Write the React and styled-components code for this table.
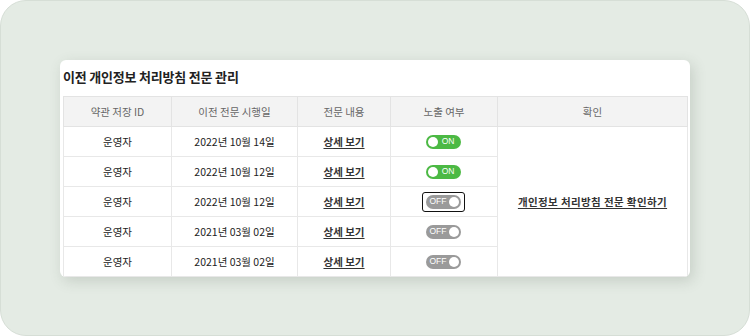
import React from "react";
import styled, { createGlobalStyle } from "styled-components";

const rows = [
  { id: "운영자", date: "2022년 10월 14일", on: true },
  { id: "운영자", date: "2022년 10월 12일", on: true },
  { id: "운영자", date: "2022년 10월 12일", on: false, focused: true },
  { id: "운영자", date: "2021년 03월 02일", on: false },
  { id: "운영자", date: "2021년 03월 02일", on: false },
];

const columns = [
  { label: "약관 저장 ID", width: 108 },
  { label: "이전 전문 시행일", width: 126 },
  { label: "전문 내용", width: 93 },
  { label: "노출 여부", width: 107 },
  { label: "확인", width: 190 },
];

const Toggle = ({ on, focused }) => (
  <ToggleRing focused={focused}>
    <ToggleBody on={on}>
      {on ? (
        <>
          <Knob />
          <ToggleText>ON</ToggleText>
        </>
      ) : (
        <>
          <ToggleText>OFF</ToggleText>
          <Knob />
        </>
      )}
    </ToggleBody>
  </ToggleRing>
);

const App = () => {
  return (
    <>
      <GlobalStyle />
      <Frame>
        <Card>
          <Title>이전 개인정보 처리방침 전문 관리</Title>
          <Table>
            <colgroup>
              {columns.map((c) => (
                <col key={c.label} style={{ width: c.width }} />
              ))}
            </colgroup>
            <thead>
              <tr>
                {columns.map((c) => (
                  <Th key={c.label}>{c.label}</Th>
                ))}
              </tr>
            </thead>
            <tbody>
              {rows.map((row, i) => (
                <tr key={i}>
                  <Td>{row.id}</Td>
                  <Td>{row.date}</Td>
                  <Td>
                    <TextLink>상세 보기</TextLink>
                  </Td>
                  <Td>
                    <Toggle on={row.on} focused={row.focused} />
                  </Td>
                  {i === 0 && (
                    <Td rowSpan={rows.length}>
                      <TextLink wide>개인정보 처리방침 전문 확인하기</TextLink>
                    </Td>
                  )}
                </tr>
              ))}
            </tbody>
          </Table>
        </Card>
      </Frame>
    </>
  );
};

export default App;

const GlobalStyle = createGlobalStyle`
  body {
    margin: 0;
    background: #ffffff;
    font-family: "Noto Sans CJK KR", "Noto Sans", sans-serif;
  }
`;

const Frame = styled.div`
  box-sizing: border-box;
  width: 750px;
  height: 336px;
  padding: 59px 0 0 59px;
  border: 1px solid #d6ded6;
  border-radius: 26px;
  background: #e4ebe4;
`;

const Card = styled.div`
  box-sizing: border-box;
  width: 630px;
  height: 217px;
  padding: 0 3px;
  background: #ffffff;
  border-radius: 6px;
  box-shadow: 3px 4px 14px rgba(60, 80, 60, 0.18);
  overflow: hidden;
`;

const Title = styled.h1`
  margin: 0;
  height: 36px;
  padding-bottom: 4px;
  box-sizing: border-box;
  display: flex;
  align-items: center;
  font-size: 13px;
  font-weight: 700;
  color: #222;
  letter-spacing: -0.2px;
`;

const Table = styled.table`
  width: 624px;
  border-collapse: collapse;
  table-layout: fixed;
  font-size: 10.5px;
`;

const Th = styled.th`
  height: 29px;
  padding: 0;
  background: #f3f3f3;
  border: 1px solid #e3e3e3;
  color: #666;
  font-weight: 400;
  text-align: center;
`;

const Td = styled.td`
  height: 29px;
  padding: 0;
  border: 1px solid #e8e8e8;
  color: #222;
  text-align: center;
  vertical-align: middle;
`;

const TextLink = styled.a`
  color: #333;
  font-weight: 700;
  letter-spacing: ${(props) => (props.wide ? "0.4px" : "0")};
  text-decoration: underline;
  text-underline-offset: 2px;
  cursor: pointer;
`;

const ToggleRing = styled.span`
  display: inline-flex;
  align-items: center;
  justify-content: center;
  box-sizing: border-box;
  width: 43px;
  height: 20px;
  margin-right: 2px;
  border-radius: 3px;
  border: 1.5px solid ${(props) => (props.focused ? "#111" : "transparent")};
  vertical-align: middle;
`;

const ToggleBody = styled.span`
  display: inline-flex;
  align-items: center;
  justify-content: space-between;
  box-sizing: border-box;
  width: 35px;
  height: 14px;
  padding: 0 2px;
  border-radius: 7px;
  background: ${(props) => (props.on ? "#4cb944" : "#9a9a9a")};
`;

const Knob = styled.span`
  width: 10px;
  height: 10px;
  border-radius: 50%;
  background: #ffffff;
`;

const ToggleText = styled.span`
  flex: 1;
  text-align: center;
  font-family: "Liberation Sans", Arial, sans-serif;
  font-size: 8.5px;
  color: #ffffff;
  line-height: 1;
`;
